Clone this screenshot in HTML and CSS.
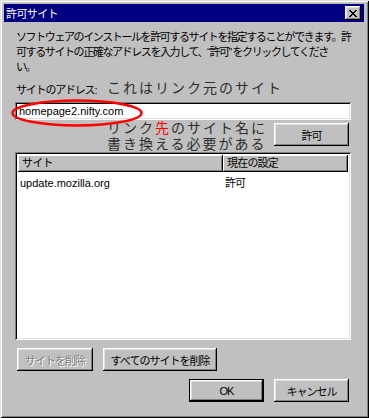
FILE: index.html
```html
<!DOCTYPE html>
<html lang="ja">

<head>
	<meta charset="UTF-8">
	<title>許可サイト</title>
	<link rel="stylesheet" href="styles.css">
</head>

<body>
	<div class="window">
		<div class="titlebar">
			<span class="title">許可サイト</span>
			<span class="close">
				<svg width="8" height="7" viewBox="0 0 8 7"><path d="M0 0h2v1h1v1h2V1h1V0h2v1H7v1H6v1H5v1h1v1h1v1h1v1H6V6H5V5H3v1H2v1H0V6h1V5h1V4h1V3H2V2H1V1H0z" fill="#000"/></svg>
			</span>
		</div>
		<div class="content">
			<p class="intro">ソフトウェアのインストールを許可するサイトを指定することができます。許<br>可するサイトの正確なアドレスを入力して、“許可” をクリックしてくださ<br>い。</p>
			<div class="label">サイトのアドレス:</div>
			<div class="field">homepage2.nifty.com</div>
			<div class="allow-row">
				<button class="btn">許可</button>
			</div>
			<div class="list">
				<div class="list-head">
					<div class="col col-site">サイト</div>
					<div class="col col-state">現在の設定</div>
				</div>
				<div class="list-row">
					<span class="cell-site">update.mozilla.org</span>
					<span class="cell-state">許可</span>
				</div>
			</div>
			<div class="remove-row">
				<button class="btn disabled">サイトを削除</button>
				<button class="btn wide">すべてのサイトを削除</button>
			</div>
			<div class="dialog-row">
				<button class="btn default">OK</button>
				<button class="btn">キャンセル</button>
			</div>
		</div>
		<!-- annotations drawn over the screenshot -->
		<div class="note note-from">これはリンク元のサイト</div>
		<div class="note note-to">リンク<em>先</em>のサイト名に<br>書き換える必要がある</div>
		<svg class="oval" width="134" height="30" viewBox="0 0 134 30">
			<ellipse cx="67" cy="15" rx="64.5" ry="12.5" fill="none" stroke="#f00" stroke-width="2.5"/>
		</svg>
	</div>
</body>

</html>
```

FILE: styles.css
```css
body {
    margin: 0;
    background-color: #c0c0c0;
    font-family: "Liberation Sans", "Noto Sans CJK JP", sans-serif;
    font-size: 11px;
    color: #000;
}
.window {
    position: relative;
    width: 369px;
    height: 418px;
    box-sizing: border-box;
    background-color: #c0c0c0;
    box-shadow: inset 1px 1px #dfdfdf, inset -1px -1px #000, inset 2px 2px #fff, inset -2px -2px #808080;
    padding-top: 4px;
}
.titlebar {
    margin: 0 5px 0 4px;
    height: 18px;
    background-color: #000080;
    color: #fff;
    display: flex;
    align-items: center;
    justify-content: space-between;
    padding: 0 3px 0 2px;
}
.title {
    font-size: 11px;
    letter-spacing: -0.6px;
}
.close {
    width: 16px;
    height: 14px;
    background-color: #c0c0c0;
    box-shadow: inset -1px -1px #000, inset 1px 1px #fff, inset -2px -2px #808080, inset 2px 2px #dfdfdf;
    display: flex;
    align-items: center;
    justify-content: center;
}
.content {
    padding: 0 18px 0 15px;
}
.intro {
    margin: 8px 0 0 1px;
    line-height: 15px;
    letter-spacing: -1.4px;
    white-space: nowrap;
}
.label {
    margin: 8px 0 0 1px;
    line-height: 15px;
    letter-spacing: -1.2px;
}
.field {
    margin-top: 4px;
    height: 18px;
    box-sizing: border-box;
    background-color: #fff;
    box-shadow: inset 1px 1px #808080, inset -1px -1px #fff, inset 2px 2px #000, inset -2px -2px #dfdfdf;
    padding: 2px 4px;
    line-height: 14px;
}
.allow-row, .dialog-row {
    display: flex;
    justify-content: flex-end;
    gap: 10px;
    padding-right: 2px;
}
.allow-row {
    margin-top: 3px;
}
.btn {
    width: 75px;
    height: 23px;
    border: none;
    background-color: #c0c0c0;
    box-shadow: inset -1px -1px #000, inset 1px 1px #fff, inset -2px -2px #808080, inset 2px 2px #dfdfdf;
    font-family: "Liberation Sans", "Noto Sans CJK JP", sans-serif;
    font-size: 11px;
    letter-spacing: -1px;
    color: #000;
    padding: 0;
}
.btn.wide {
    width: 114px;
}
.btn.disabled {
    width: 76px;
    color: #808080;
    text-shadow: 1px 1px #fff;
}
.btn.default {
    box-shadow: inset 0 0 0 1px #000, inset -2px -2px #000, inset 2px 2px #fff, inset -3px -3px #808080, inset 3px 3px #dfdfdf;
}
.list {
    margin-top: 6px;
    height: 188px;
    box-sizing: border-box;
    background-color: #fff;
    box-shadow: inset 1px 1px #808080, inset -1px -1px #fff, inset 2px 2px #000, inset -2px -2px #dfdfdf;
    padding: 3px;
}
.list-head {
    display: flex;
    height: 17px;
}
.col {
    box-sizing: border-box;
    background-color: #c0c0c0;
    box-shadow: inset -1px -1px #000, inset 1px 1px #fff, inset -2px -2px #808080;
    padding: 0 4px;
    line-height: 16px;
    letter-spacing: -0.8px;
}
.col-site {
    width: 205px;
}
.col-state {
    width: 125px;
}
.list-row {
    display: flex;
    margin-top: 4px;
    line-height: 15px;
}
.cell-site {
    width: 204px;
    padding-left: 2px;
}
.cell-state {
    padding-left: 1px;
    letter-spacing: -1px;
}
.remove-row {
    margin: 8px 0 0 2px;
    display: flex;
    gap: 10px;
}
.dialog-row {
    margin-top: 8px;
}
.note {
    position: absolute;
    left: 107px;
    font-family: "Noto Sans CJK JP", sans-serif;
    font-size: 14px;
    letter-spacing: 2px;
    color: #2e2e2e;
    white-space: nowrap;
}
.note em {
    font-style: normal;
    color: #f00;
}
.note-from {
    top: 77px;
    line-height: 20px;
}
.note-to {
    top: 120px;
    line-height: 15.5px;
}
.oval {
    position: absolute;
    left: 10px;
    top: 98px;
}
```
